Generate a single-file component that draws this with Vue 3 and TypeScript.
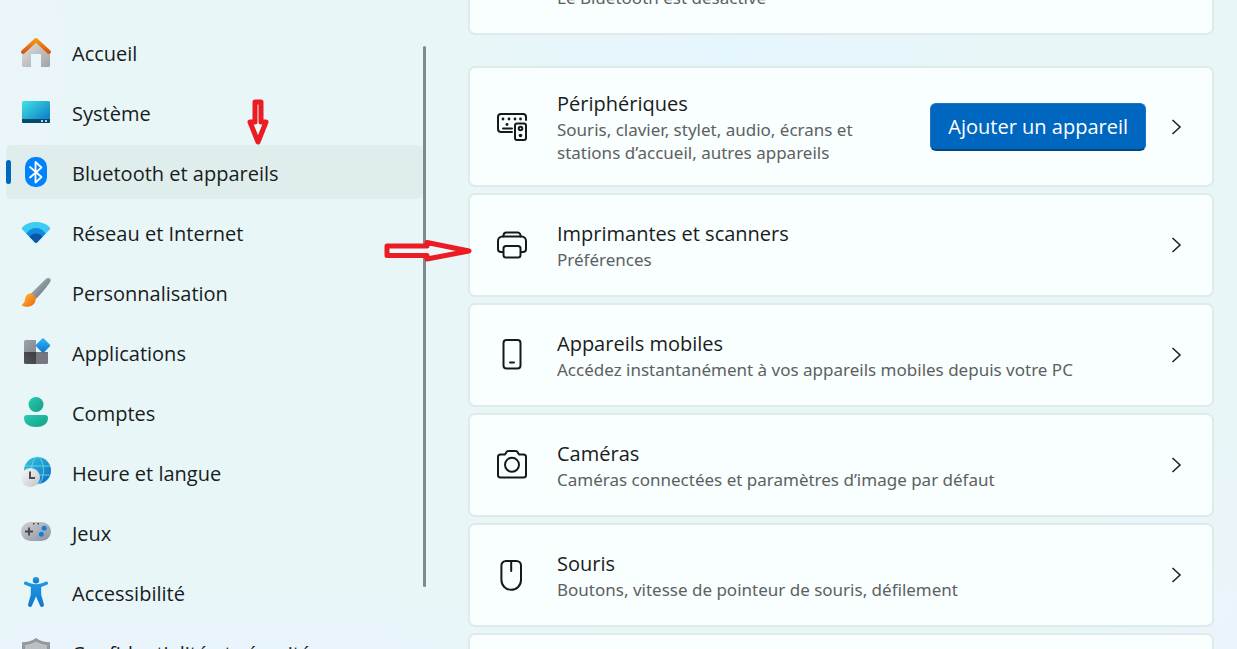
<script setup lang="ts">
import { ref } from 'vue'

interface NavItem {
  id: string
  label: string
}

interface SettingCard {
  id: string
  title: string
  detail: string
  action?: string
}

const navItems: NavItem[] = [
  { id: 'home', label: 'Accueil' },
  { id: 'system', label: 'Système' },
  { id: 'bluetooth', label: 'Bluetooth et appareils' },
  { id: 'network', label: 'Réseau et Internet' },
  { id: 'personal', label: 'Personnalisation' },
  { id: 'apps', label: 'Applications' },
  { id: 'accounts', label: 'Comptes' },
  { id: 'time', label: 'Heure et langue' },
  { id: 'games', label: 'Jeux' },
  { id: 'access', label: 'Accessibilité' },
  { id: 'privacy', label: 'Confidentialité et sécurité' },
]

const cards: SettingCard[] = [
  {
    id: 'devices',
    title: 'Périphériques',
    detail: 'Souris, clavier, stylet, audio, écrans et stations d’accueil, autres appareils',
    action: 'Ajouter un appareil',
  },
  { id: 'printers', title: 'Imprimantes et scanners', detail: 'Préférences' },
  { id: 'phone', title: 'Appareils mobiles', detail: 'Accédez instantanément à vos appareils mobiles depuis votre PC' },
  { id: 'camera', title: 'Caméras', detail: 'Caméras connectées et paramètres d’image par défaut' },
  { id: 'mouse', title: 'Souris', detail: 'Boutons, vitesse de pointeur de souris, défilement' },
]

const selected = ref('bluetooth')
</script>

<template>
  <div class="settings">
    <aside class="sidebar">
      <nav class="nav" aria-label="Paramètres">
        <a
          v-for="item in navItems"
          :key="item.id"
          :href="'#' + item.id"
          class="nav-item"
          :class="{ active: item.id === selected }"
          @click="selected = item.id"
        >
          <svg class="icon" viewBox="0 0 36 36" aria-hidden="true">
            <template v-if="item.id === 'home'">
              <defs>
                <linearGradient id="wall" x1="0" y1="0" x2="1" y2="1">
                  <stop offset="0" stop-color="#e4e4e6" /><stop offset="1" stop-color="#a2a2a6" />
                </linearGradient>
                <linearGradient id="roof" x1="0" y1="0" x2="0" y2="1">
                  <stop offset="0" stop-color="#f4970f" /><stop offset="1" stop-color="#d9560f" />
                </linearGradient>
              </defs>
              <path d="M4 17 18 5l14 12v14.500a1.500 1.500 0 0 1-1.500 1.500H23V21a1 1 0 0 0-1-1h-8a1 1 0 0 0-1 1v12H5.500A1.500 1.500 0 0 1 4 31.500z" fill="url(#wall)" />
              <path d="M5 18 18 6l13 12" fill="none" stroke="url(#roof)" stroke-width="4" stroke-linecap="round" stroke-linejoin="round" />
            </template>
            <template v-else-if="item.id === 'system'">
              <defs>
                <linearGradient id="screen" x1="0" y1="0" x2="1" y2="1">
                  <stop offset="0" stop-color="#3fe3e3" /><stop offset="1" stop-color="#0a72c4" />
                </linearGradient>
              </defs>
              <rect x="4" y="7" width="28" height="22" rx="1.500" fill="url(#screen)" />
              <path d="M4 25h28v2.500a1.500 1.500 0 0 1-1.500 1.500h-25A1.500 1.500 0 0 1 4 27.500z" fill="#064a6b" />
              <path d="M23 26h2v2h-2zM27 26h2v2h-2z" fill="#a9d8ef" />
            </template>
            <template v-else-if="item.id === 'bluetooth'">
              <rect x="7" y="3" width="22" height="30" rx="10" fill="#0082fc" />
              <path d="m12 13 11.500 10-6 5.500V8l6 5.500L12 23.500" fill="none" stroke="#fff" stroke-width="1.800" stroke-linejoin="round" stroke-linecap="round" />
            </template>
            <template v-else-if="item.id === 'network'">
              <path d="M4.300 15.500a1.600 1.600 0 0 1 .2-2.400C8 9.500 12.700 8 18 8s10 1.500 13.500 5.100a1.600 1.600 0 0 1 .2 2.400L19 28.400a1.500 1.500 0 0 1-2 0z" fill="#3bcbf3" />
              <path d="M8.300 19.500C11 16 14 14 18 14s7 2 9.700 5.500L19 28.400a1.500 1.500 0 0 1-2 0z" fill="#118be0" />
              <path d="M11.500 22.800C13.300 20.600 15.300 19.500 18 19.500s4.700 1.100 6.500 3.300L19 28.400a1.500 1.500 0 0 1-2 0z" fill="#0b57a5" />
            </template>
            <template v-else-if="item.id === 'personal'">
              <defs>
                <linearGradient id="handle" x1="0" y1="0" x2="1" y2="1">
                  <stop offset="0.200" stop-color="#aab0b8" /><stop offset="0.800" stop-color="#6f757e" />
                </linearGradient>
                <linearGradient id="bristle" x1="0" y1="0" x2="1" y2="1">
                  <stop offset="0" stop-color="#ffc02c" /><stop offset="1" stop-color="#ef5f16" />
                </linearGradient>
              </defs>
              <path d="M28 4.700c2-1.700 5.500-.7 4.500 2.500-.3 1-8.500 12.300-14.700 17.800l-5.300-5z" fill="url(#handle)" />
              <path d="M12.500 19.500c2.700 0 5.200 2.500 5.200 5.500 0 7-8.200 9.200-13 7-1.200-.7-.9-1.600 0-2.100 2.600-1.600 1.900-4 2.700-6.400.8-2.500 2.600-4 5.100-4z" fill="url(#bristle)" />
            </template>
            <template v-else-if="item.id === 'apps'">
              <defs>
                <linearGradient id="tileA" x1="0" y1="0" x2="1" y2="1">
                  <stop offset="0" stop-color="#9da2aa" /><stop offset="1" stop-color="#858991" />
                </linearGradient>
                <linearGradient id="tileB" x1="0" y1="1" x2="1" y2="0">
                  <stop offset="0" stop-color="#55565a" /><stop offset="1" stop-color="#3c3d40" />
                </linearGradient>
                <linearGradient id="tileC" x1="0" y1="0" x2="1" y2="1">
                  <stop offset="0" stop-color="#30bdf2" /><stop offset="1" stop-color="#0a72cf" />
                </linearGradient>
              </defs>
              <path d="M7.500 6H18v12H6V7.500A1.500 1.500 0 0 1 7.500 6z" fill="url(#tileA)" />
              <path d="M6 18h12v12H7.500A1.500 1.500 0 0 1 6 28.500z" fill="url(#tileB)" />
              <path d="M18 18h12v10.500a1.500 1.500 0 0 1-1.500 1.500H18z" fill="#74777e" />
              <rect x="19.500" y="6" width="11" height="11" rx="1.200" transform="rotate(45 25 11.500)" fill="url(#tileC)" />
            </template>
            <template v-else-if="item.id === 'accounts'">
              <defs>
                <linearGradient id="person" x1="0" y1="0" x2="1" y2="1">
                  <stop offset="0" stop-color="#27ccb4" /><stop offset="1" stop-color="#149d83" />
                </linearGradient>
              </defs>
              <circle cx="18" cy="10.500" r="7.500" fill="url(#person)" />
              <path d="M9 21h18a3 3 0 0 1 3 3c0 6-5.500 9-12 9S6 30 6 24a3 3 0 0 1 3-3z" fill="url(#person)" />
            </template>
            <template v-else-if="item.id === 'time'">
              <defs>
                <linearGradient id="globe" x1="0" y1="0" x2="1" y2="1">
                  <stop offset="0" stop-color="#35c9dd" /><stop offset="1" stop-color="#0b68c0" />
                </linearGradient>
                <linearGradient id="dial" x1="0" y1="0" x2="1" y2="1">
                  <stop offset="0" stop-color="#fafafa" /><stop offset="1" stop-color="#c2c3c6" />
                </linearGradient>
              </defs>
              <circle cx="19.500" cy="16.500" r="13.500" fill="url(#globe)" />
              <g fill="none" stroke="#5fd3e8" stroke-width="1">
                <ellipse cx="19.500" cy="16.500" rx="6" ry="13.500" />
                <path d="M7.500 12h24M7.500 21h24" />
              </g>
              <circle cx="12.500" cy="23.500" r="9.500" fill="url(#dial)" />
              <path d="M12 17.500V24h5" fill="none" stroke="#4b4d52" stroke-width="2" />
            </template>
            <template v-else-if="item.id === 'games'">
              <defs>
                <linearGradient id="pad" x1="0" y1="0" x2="1" y2="1">
                  <stop offset="0" stop-color="#cfd1d6" /><stop offset="1" stop-color="#8d919a" />
                </linearGradient>
              </defs>
              <rect x="3" y="8" width="30" height="19" rx="9.500" fill="url(#pad)" />
              <path d="M11 13.500v8M7 17.500h8" stroke="#44474d" stroke-width="1.800" />
              <circle cx="26.200" cy="14.300" r="2.500" fill="#0f7fdc" />
              <circle cx="23.300" cy="20.300" r="2.500" fill="#0f7fdc" />
              <path d="M15 9h1.500v1.500H15zM19.500 9H21v1.500h-1.500z" fill="#44474d" />
            </template>
            <template v-else-if="item.id === 'access'">
              <defs>
                <linearGradient id="body" x1="0" y1="0" x2="0" y2="1">
                  <stop offset="0" stop-color="#2199e5" /><stop offset="1" stop-color="#0f78cc" />
                </linearGradient>
              </defs>
              <circle cx="18" cy="6.200" r="3.200" fill="url(#body)" />
              <path d="M8.300 7.600c3.500 1.700 6.200 2.700 9.700 2.700s6.200-1 9.700-2.700c2.300-.8 3.300 2.200 1.200 3.200-2 1-4 1.800-5.700 2.300v7.400l2.700 10c.6 2.400-2.900 3.600-3.900 1.100L18 22.500l-4 9.100c-1 2.500-4.500 1.300-3.900-1.100l2.700-10v-7.400c-1.700-.5-3.700-1.300-5.700-2.300-2.100-1-1.100-4 1.200-3.200z" fill="url(#body)" />
            </template>
            <template v-else>
              <path d="M18 4c4.500 3 8.500 4 14 4.300V18c0 8-6 13-14 16C10 31 4 26 4 18V8.300C9.500 8 13.500 7 18 4z" fill="#92989e" />
              <path d="M18 7.500c3.500 2 6.500 3 11 3.500v7c0 6-4.500 10-11 13-6.500-3-11-7-11-13v-7c4.500-.5 7.500-1.500 11-3.500z" fill="#bcc0c4" />
            </template>
          </svg>
          <span class="nav-label">{{ item.label }}</span>
        </a>
      </nav>
      <div class="scrollbar" aria-hidden="true"></div>
    </aside>

    <main class="content">
      <section class="card status-card">
        <div class="card-text">
          <h2 class="card-title">Bluetooth</h2>
          <p class="card-detail">Le Bluetooth est désactivé</p>
        </div>
      </section>

      <section v-for="card in cards" :key="card.id" class="card" :class="{ tall: card.action }">
        <svg class="icon line-icon" viewBox="0 0 36 36" aria-hidden="true">
          <template v-if="card.id === 'devices'">
            <path d="M18 23H7a3 3 0 0 1-3-3V8a3 3 0 0 1 3-3h22a3 3 0 0 1 3 3v3M9 19.500h9" />
            <rect x="21" y="14.500" width="11" height="16.500" rx="2" />
            <circle cx="26.500" cy="19.500" r="1.800" />
            <g class="dots">
              <circle cx="9" cy="10" r="1.400" /><circle cx="15" cy="10" r="1.400" />
              <circle cx="21" cy="10" r="1.400" /><circle cx="26.500" cy="10" r="1.400" />
              <circle cx="13" cy="15.500" r="1.400" /><circle cx="26.500" cy="26.500" r="1.800" />
            </g>
          </template>
          <template v-else-if="card.id === 'printers'">
            <path d="M9.500 9.500V8.500A3 3 0 0 1 12.500 5.500h11a3 3 0 0 1 3 3v1" />
            <path d="M9 25H7a3 3 0 0 1-3-3v-8a4.500 4.500 0 0 1 4.500-4.500h19A4.500 4.500 0 0 1 32 14v8a3 3 0 0 1-3 3h-2" />
            <rect x="9.500" y="19" width="17" height="11.500" rx="2.500" />
          </template>
          <template v-else-if="card.id === 'phone'">
            <rect x="9.500" y="3" width="17" height="28.500" rx="3" />
            <path d="M16 25.500h4" />
          </template>
          <template v-else-if="card.id === 'camera'">
            <path d="M4 10a2.500 2.500 0 0 1 2.500-2.500H11l1.500-2.500a2 2 0 0 1 1.700-1h7.600a2 2 0 0 1 1.700 1L25 7.500h4.500A2.500 2.500 0 0 1 32 10v18a2.500 2.500 0 0 1-2.500 2.500h-23A2.500 2.500 0 0 1 4 28z" />
            <circle cx="18" cy="17.800" r="7" />
          </template>
          <template v-else>
            <path d="M11.500 4h11A4.500 4.500 0 0 1 27 8.500V23a9.800 9.800 0 0 1-19.600 0V8.500A4.500 4.500 0 0 1 12 4zM17.200 4v10" />
          </template>
        </svg>
        <div class="card-text">
          <h2 class="card-title">{{ card.title }}</h2>
          <p class="card-detail">{{ card.detail }}</p>
        </div>
        <button v-if="card.action" type="button" class="action">{{ card.action }}</button>
        <button type="button" class="open" :aria-label="card.title">
          <svg viewBox="0 0 16 16" aria-hidden="true"><path d="m4.500 1 7.500 7-7.500 7" /></svg>
        </button>
      </section>

      <section class="card"></section>
    </main>

    <svg class="marker marker-down" viewBox="0 0 22 46" aria-hidden="true">
      <path d="M8 3h6v20h5l-8 20-8-20h5z" />
    </svg>
    <svg class="marker marker-right" viewBox="0 0 88 24" aria-hidden="true">
      <path d="M3 7h40V3.500L85 12 43 20v-3.500H3z" />
    </svg>
  </div>
</template>

<style>
body {
  margin: 0;
  overflow: hidden;
}
</style>

<style scoped>
.settings {
  position: relative;
  display: grid;
  grid-template-columns: 426px minmax(0, 1fr);
  grid-template-rows: minmax(0, 1fr);
  height: 100vh;
  overflow: hidden;
  color: #191c1d;
  font-family: "Segoe UI", "Open Sans", "Noto Sans", sans-serif;
  font-size: 20px;
  background:
    radial-gradient(ellipse 110px 200px at 0 60px, #ebf5fb, transparent),
    radial-gradient(ellipse 300px 80px at 730px 50px, #e5f5fd, transparent),
    radial-gradient(ellipse 500px 70px at 200px 100%, #e9f4fc, transparent),
    radial-gradient(ellipse 200px 260px at 100% 100%, #ebf4fb, transparent),
    #e8f6f7;
}

.sidebar {
  position: relative;
}

.nav {
  display: flex;
  flex-direction: column;
  gap: 6px;
  padding: 25px 3px 0 6px;
}

.nav-item {
  position: relative;
  display: flex;
  align-items: center;
  flex: none;
  gap: 18px;
  height: 54px;
  padding-left: 12px;
  border-radius: 6px;
  color: inherit;
  line-height: 28px;
  text-decoration: none;
}

.nav-label {
  padding-top: 4px;
}

.nav-item.active {
  background: #e0eded;
}

.nav-item.active::before {
  content: "";
  position: absolute;
  left: 0;
  top: 15px;
  width: 5px;
  height: 24px;
  border-radius: 3px;
  background: #0067c0;
}

.icon {
  flex: none;
  width: 36px;
  height: 36px;
}

.scrollbar {
  position: absolute;
  top: 46px;
  right: 0;
  bottom: 62px;
  width: 3px;
  border-radius: 2px;
  background: #7f8a8b;
}

.content {
  display: flex;
  flex-direction: column;
  gap: 6px;
  margin-top: -69px;
  padding: 0 23px 0 42px;
}

.card {
  display: flex;
  align-items: center;
  flex: none;
  box-sizing: border-box;
  min-height: 104px;
  padding: 0 28px 0 24px;
  border: 2px solid #dfeaeb;
  border-radius: 7px;
  background: #f9fefe;
}

.card.tall {
  min-height: 121px;
}

.status-card {
  margin-bottom: 25px;
  padding-left: 87px;
}

.line-icon {
  margin-right: 27px;
  fill: none;
  stroke: #15191a;
  stroke-width: 2;
  stroke-linecap: round;
  stroke-linejoin: round;
}

.dots {
  fill: #15191a;
  stroke: none;
}

.card-text {
  flex: 1;
  min-width: 0;
}

.card-title {
  margin: 0;
  font-size: 20px;
  font-weight: 400;
  line-height: 28px;
}

.card-detail {
  margin: 0;
  color: #5c6162;
  font-family: "Segoe UI", "Noto Sans", "Open Sans", sans-serif;
  font-size: 17px;
  line-height: 23px;
}

.tall .card-detail {
  max-width: 320px;
}

.action {
  flex: none;
  height: 48px;
  margin-right: 22px;
  padding: 0 17px;
  border: 1px solid #1b74c4;
  border-bottom: 2px solid #054783;
  border-radius: 6px;
  background: #0067c0;
  color: #fff;
  font: inherit;
}

.open {
  display: flex;
  flex: none;
  padding: 0;
  border: 0;
  background: none;
}

.open svg {
  width: 16px;
  height: 16px;
  fill: none;
  stroke: #222627;
  stroke-width: 1.600;
}

.marker {
  position: absolute;
  fill: #eef8f9;
  stroke: #ec1c24;
  stroke-width: 5;
  stroke-linejoin: round;
}

.marker-down {
  left: 247px;
  top: 99px;
  width: 22px;
  height: 46px;
}

.marker-right {
  left: 384px;
  top: 239px;
  width: 88px;
  height: 24px;
}
</style>
